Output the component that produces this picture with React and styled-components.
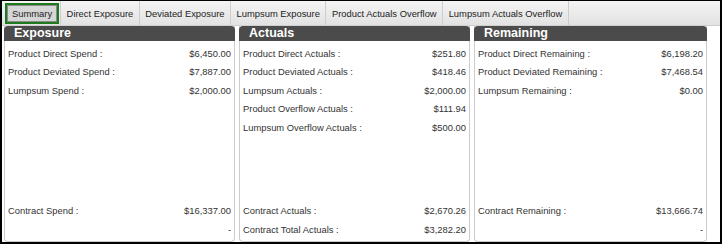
import React, {useState} from 'react';
import styled, {createGlobalStyle} from 'styled-components';

const GlobalStyle = createGlobalStyle`
  html, body { margin: 0; padding: 0; background: #fff; }
  body { font-family: Arial, "Liberation Sans", sans-serif; }
`

const tabs = ['Summary', 'Direct Exposure', 'Deviated Exposure', 'Lumpsum Exposure', 'Product Actuals Overflow', 'Lumpsum Actuals Overflow'];

const panels = [
  {
    title: 'Exposure',
    rows: [['Product Direct Spend :', '$6,450.00'], ['Product Deviated Spend :', '$7,887.00'], ['Lumpsum Spend :', '$2,000.00']],
    totals: [['Contract Spend :', '$16,337.00'], ['', '-']],
  },
  {
    title: 'Actuals',
    rows: [['Product Direct Actuals :', '$251.80'], ['Product Deviated Actuals :', '$418.46'], ['Lumpsum Actuals :', '$2,000.00'], ['Product Overflow Actuals :', '$111.94'], ['Lumpsum Overflow Actuals :', '$500.00']],
    totals: [['Contract Actuals :', '$2,670.26'], ['Contract Total Actuals :', '$3,282.20']],
  },
  {
    title: 'Remaining',
    rows: [['Product Direct Remaining :', '$6,198.20'], ['Product Deviated Remaining :', '$7,468.54'], ['Lumpsum Remaining :', '$0.00']],
    totals: [['Contract Remaining :', '$13,666.74'], ['', '-']],
    wide: true,
  },
];

function App() {
  const [active, setActive] = useState('Summary');
  return (
    <>
      <GlobalStyle />
      <Frame>
        <TabBar>
          {tabs.map((t) => (
            <Tab key={t} $active={active === t} onClick={() => setActive(t)}>
              <TabLabel $active={active === t}>{t}</TabLabel>
            </Tab>
          ))}
        </TabBar>
        <Panels>
          {panels.map((p) => (
            <Panel key={p.title} $wide={p.wide}>
              <Header>{p.title}</Header>
              <Body>
                <div>
                  {p.rows.map(([l, v]) => (
                    <Row key={l}><span>{l}</span><span>{v}</span></Row>
                  ))}
                </div>
                <div>
                  {p.totals.map(([l, v], i) => (
                    <Row key={i}><span>{l}</span><span>{v}</span></Row>
                  ))}
                </div>
              </Body>
            </Panel>
          ))}
        </Panels>
      </Frame>
    </>
  )
}

const Frame = styled.div`
  width: 722px;
  height: 244px;
  box-sizing: border-box;
  border: 2px solid #000;
  border-top-width: 1px;
  display: flex;
  flex-direction: column;
  overflow: hidden;
`

const TabBar = styled.div`
  height: 25px;
  flex: none;
  display: flex;
  align-items: stretch;
  padding-left: 2px;
  background: linear-gradient(#f4f4f4, #e2e2e2);
  border-bottom: 1px solid #cfcfcf;
  box-sizing: border-box;
`

const Tab = styled.div`
  display: flex;
  align-items: center;
  padding: ${(p) => (p.$active ? '0 1px 0 1px' : '0 5.5px')};
  border-right: 1px solid #cdcdcd;
  cursor: pointer;
`

const TabLabel = styled.span`
  font-size: 9.4px;
  color: #222;
  white-space: nowrap;
  ${(p) => p.$active && `
    border: 2px solid #1d7a1d;
    box-shadow: inset 0 0 0 1px #8a8a8a;
    background: #d6d6d6;
    padding: 2px 5px;
    height: 13px;
    line-height: 13px;
  `}
`

const Panels = styled.div`
  flex: 1;
  display: flex;
  gap: 4px;
  padding: 0 12px 0 2px;
  min-height: 0;
`

const Panel = styled.div`
  width: ${(p) => (p.$wide ? '233px' : '231px')};
  flex: none;
  display: flex;
  flex-direction: column;
  border: 1px solid #cccccc;
  border-top: none;
  border-radius: 0 0 4px 4px;
  box-sizing: border-box;
`

const Header = styled.div`
  height: 15px;
  margin: 0 -1px;
  background: #4b4b4b;
  border-radius: 4px 4px 0 0;
  color: #fff;
  font-weight: bold;
  font-size: 12.5px;
  line-height: 15px;
  padding-left: 10px;
`

const Body = styled.div`
  flex: 1;
  display: flex;
  flex-direction: column;
  justify-content: space-between;
  padding: 3.5px 3px 2px 3px;
`

const Row = styled.div`
  display: flex;
  justify-content: space-between;
  height: 18.5px;
  line-height: 18.5px;
  font-size: 9.4px;
  color: #333;
`

export default App
